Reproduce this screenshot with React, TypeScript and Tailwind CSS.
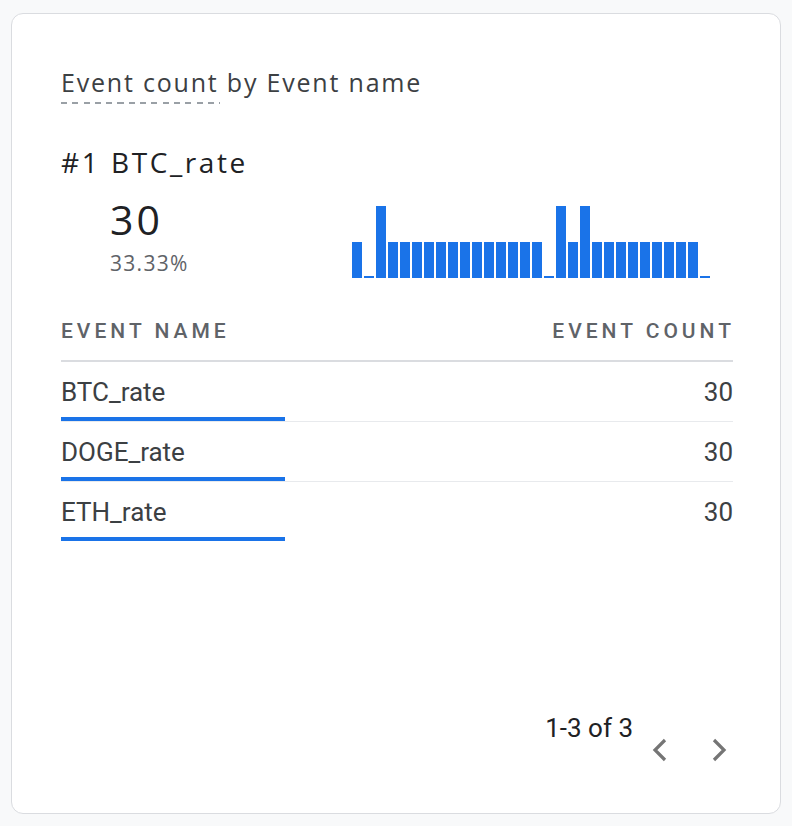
const bars: Array<"m" | "s" | "t"> = [
  "m", "s", "t",
  "m", "m", "m", "m", "m", "m", "m", "m", "m", "m", "m", "m", "m",
  "s", "t", "m", "t",
  "m", "m", "m", "m", "m", "m", "m", "m", "m",
  "s",
];

const rows = [
  { name: "BTC_rate", count: 30 },
  { name: "DOGE_rate", count: 30 },
  { name: "ETH_rate", count: 30 },
];

function Chevron({ dir }: { dir: "left" | "right" }) {
  return (
    <svg width="15" height="24" viewBox="0 0 15 24" className="text-[#757575]">
      <polyline
        points={dir === "left" ? "13,2 3,12 13,22" : "2,2 12,12 2,22"}
        fill="none"
        stroke="currentColor"
        strokeWidth="3.2"
      />
    </svg>
  );
}

export default function App() {
  return (
    <div className="min-h-[826px] bg-[#f8f9fa] pt-[13px] pl-[11px] font-['Roboto',sans-serif]">
      <div className="w-[770px] h-[801px] bg-white border border-[#dadce0] rounded-[12px] pl-[49px] pr-[47px] pt-[52px] flex flex-col">
        <div className="font-['Open_Sans',sans-serif] text-[25px] leading-[32px] tracking-[1.8px] text-[#3c4043]">
          Event count by Event name
        </div>
        <div className="mt-[4px] h-[2px] w-[159px] bg-[repeating-linear-gradient(to_right,#9aa0a6_0_6px,transparent_6px_11.3px)]" />

        <div className="mt-[40px] font-['Open_Sans',sans-serif] text-[28px] leading-[36px] tracking-[2.6px] text-[#202124] flex">
          <span className="w-[50px]">#1</span>
          <span>BTC_rate</span>
        </div>

        <div className="flex items-end">
          <div className="w-[291px] pl-[49px]">
            <div className="mt-[15px] font-['Open_Sans',sans-serif] text-[41px] leading-[48px] tracking-[3px] text-[#202124]">
              30
            </div>
            <div className="mt-[6px] font-['Open_Sans',sans-serif] text-[21px] leading-[28px] tracking-[1.3px] text-[#5f6368]">
              33.33%
            </div>
          </div>
          <div className="flex items-end gap-[2px] h-[72px] mb-[-1px]">
            {bars.map((b, i) => (
              <div
                key={i}
                className={
                  "w-[10px] bg-[#1a73e8] " +
                  (b === "t" ? "h-[72px]" : b === "m" ? "h-[36px]" : "h-[2px]")
                }
              />
            ))}
          </div>
        </div>

        <div className="mt-[40px] pb-[15px] border-b-2 border-[#dadce0] flex justify-between text-[21px] leading-[28px] tracking-[4px] font-medium text-[#5f6368]">
          <span>EVENT NAME</span>
          <span className="mr-[-2px]">EVENT COUNT</span>
        </div>

        {rows.map((r, i) => (
          <div
            key={r.name}
            className={"pt-[14px] " + (i < rows.length - 1 ? "border-b border-[#e8eaed]" : "")}
          >
            <div className="flex justify-between text-[26px] leading-[32px] text-[#3c4043]">
              <span>{r.name}</span>
              <span>{r.count}</span>
            </div>
            <div className="mt-[9px] h-[4px] w-[224px] bg-[#1a73e8]" />
          </div>
        ))}

        <div className="mt-auto mb-[51px] flex justify-end items-start pr-[6px]">
          <span className="text-[26px] leading-[32px] text-[#202124]">1-3 of 3</span>
          <div className="mt-[26px] ml-[19px] flex gap-[45px]">
            <Chevron dir="left" />
            <Chevron dir="right" />
          </div>
        </div>
      </div>
    </div>
  );
}
